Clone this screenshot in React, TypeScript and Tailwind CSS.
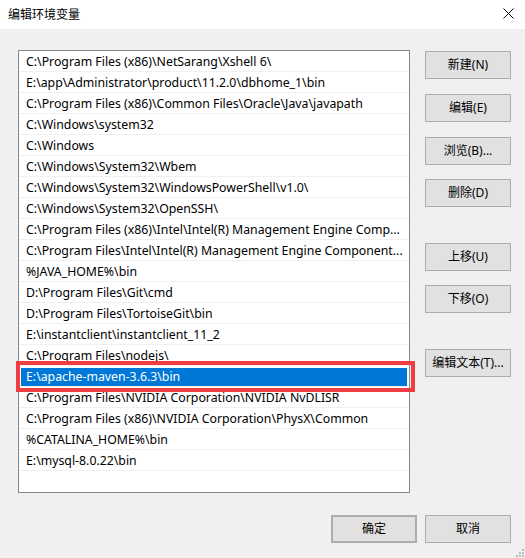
import React from "react";

const paths = [
  "C:\\Program Files (x86)\\NetSarang\\Xshell 6\\",
  "E:\\app\\Administrator\\product\\11.2.0\\dbhome_1\\bin",
  "C:\\Program Files (x86)\\Common Files\\Oracle\\Java\\javapath",
  "C:\\Windows\\system32",
  "C:\\Windows",
  "C:\\Windows\\System32\\Wbem",
  "C:\\Windows\\System32\\WindowsPowerShell\\v1.0\\",
  "C:\\Windows\\System32\\OpenSSH\\",
  "C:\\Program Files (x86)\\Intel\\Intel(R) Management Engine Comp...",
  "C:\\Program Files\\Intel\\Intel(R) Management Engine Component...",
  "%JAVA_HOME%\\bin",
  "D:\\Program Files\\Git\\cmd",
  "D:\\Program Files\\TortoiseGit\\bin",
  "E:\\instantclient\\instantclient_11_2",
  "C:\\Program Files\\nodejs\\",
  "E:\\apache-maven-3.6.3\\bin",
  "C:\\Program Files\\NVIDIA Corporation\\NVIDIA NvDLISR",
  "C:\\Program Files (x86)\\NVIDIA Corporation\\PhysX\\Common",
  "%CATALINA_HOME%\\bin",
  "E:\\mysql-8.0.22\\bin",
];

const SELECTED = 15;

const font = "font-['Segoe_UI','Noto_Sans','Noto_Sans_CJK_SC',sans-serif]";

function Btn({ label, className = "" }: { label: string; className?: string }) {
  return (
    <button
      className={`flex h-[28px] w-[86px] items-center justify-center border border-[#adadad] bg-[#e1e1e1] text-[12px] text-black ${className}`}
    >
      {label}
    </button>
  );
}

export default function App() {
  return (
    <div className={`relative h-[558px] w-[525px] overflow-hidden bg-[#f0f0f0] ${font}`}>
      {/* title bar */}
      <div className="flex h-[29px] items-center justify-between bg-white pl-[8px] pr-[11px]">
        <span className="text-[12px] text-black">编辑环境变量</span>
        <svg width="11" height="11" viewBox="0 0 11 11" className="mb-[3px]">
          <path d="M0.5 0.5 L10.5 10.5 M10.5 0.5 L0.5 10.5" stroke="#000" strokeWidth="1" />
        </svg>
      </div>

      <div className="flex pl-[18px] pt-[21px]">
        {/* path list */}
        <div className="relative h-[443px] w-[392px] overflow-hidden border border-[#828790] bg-white">
          {paths.map((p, i) => (
            <div key={p} className="h-[21px] border-b border-[#f0f0f0] px-[2px] pt-[2px]">
              <div
                className={`flex h-[18px] items-center overflow-hidden pl-[5px] text-[12.3px] whitespace-nowrap ${
                  i === SELECTED ? "bg-[#0078d7] text-white" : "text-black"
                }`}
              >
                {p}
              </div>
            </div>
          ))}
        </div>

        {/* side buttons */}
        <div className="ml-[15px] flex flex-col pt-[1px]">
          <Btn label="新建(N)" />
          <Btn label="编辑(E)" className="mt-[15px]" />
          <Btn label="浏览(B)..." className="mt-[15px]" />
          <Btn label="删除(D)" className="mt-[14px]" />
          <Btn label="上移(U)" className="mt-[36px]" />
          <Btn label="下移(O)" className="mt-[14px]" />
          <Btn label="编辑文本(T)..." className="mt-[36px]" />
        </div>
      </div>

      {/* highlight frame around the selected entry */}
      <div className="absolute left-[16px] top-[361px] h-[31px] w-[399px] border-[4px] border-[#ef3e42]" />

      {/* dialog footer */}
      <div className="mt-[22px] flex justify-end gap-[8px] pr-[14px]">
        <Btn label="确定" className="border-2 border-[#0078d7]" />
        <Btn label="取消" />
      </div>

      {/* resize grip */}
      <svg className="absolute bottom-0 right-0" width="12" height="12" viewBox="0 0 12 12">
        <rect x="9" y="3" width="2" height="2" fill="#bcbcbc" />
        <rect x="6" y="6" width="2" height="2" fill="#bcbcbc" />
        <rect x="9" y="6" width="2" height="2" fill="#bcbcbc" />
        <rect x="3" y="9" width="2" height="2" fill="#bcbcbc" />
        <rect x="6" y="9" width="2" height="2" fill="#bcbcbc" />
        <rect x="9" y="9" width="2" height="2" fill="#bcbcbc" />
      </svg>
    </div>
  );
}
